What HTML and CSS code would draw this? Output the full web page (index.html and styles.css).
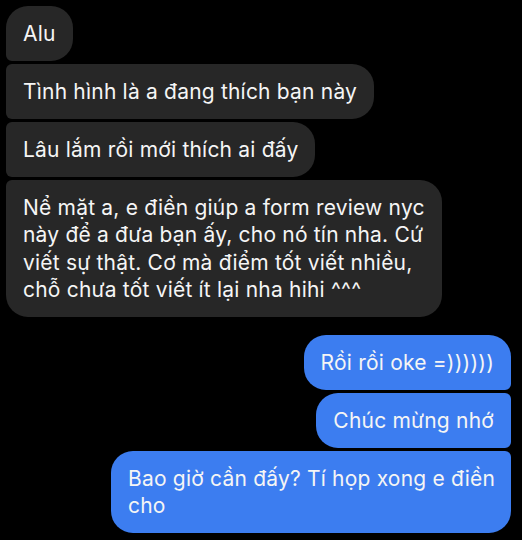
FILE: index.html
```html
<!DOCTYPE html>
<html lang="vi">
<head>
<meta charset="utf-8">
<link rel="stylesheet" href="styles.css">
</head>
<body>
<div class="chat">
  <div class="group in">
    <div class="bubble first">Alu</div>
    <div class="bubble mid">Tình hình là a đang thích bạn này</div>
    <div class="bubble mid">Lâu lắm rồi mới thích ai đấy</div>
    <div class="bubble last wide">Nể mặt a, e điền giúp a form review nyc<br>này để a đưa bạn ấy, cho nó tín nha. Cứ<br>viết sự thật. Cơ mà điểm tốt viết nhiều,<br>chỗ chưa tốt viết ít lại nha hihi ^^^</div>
  </div>
  <div class="group out">
    <div class="bubble first">Rồi rồi oke =))))))</div>
    <div class="bubble mid">Chúc mừng nhớ</div>
    <div class="bubble last wide">Bao giờ cần đấy? Tí họp xong e điền<br>cho</div>
  </div>
</div>
</body>
</html>
```
FILE: styles.css
```css
html, body {
  margin: 0;
  padding: 0;
  background: #000;
}
body {
  font-family: Inter, "Noto Sans", sans-serif;
  font-size: 21px;
  letter-spacing: 0.2px;
  line-height: 27.5px;
  color: #f5f5f5;
}
.chat {
  display: flex;
  flex-direction: column;
  gap: 18px;
  padding: 6px 11px 0 6px;
}
.group {
  display: flex;
  flex-direction: column;
  gap: 3.5px;
}
.group.in { align-items: flex-start; }
.group.out { align-items: flex-end; }
.bubble {
  padding: 13.5px 17px;
  border-radius: 22px;
  white-space: nowrap;
}
.in .bubble {
  background: #272727;
}
.out .bubble {
  background: #3c7df0;
}
.bubble.wide { box-sizing: border-box; }
.in .bubble.wide { width: 436px; }
.out .bubble.wide { width: 400px; }
.in .first { border-bottom-left-radius: 6px; }
.in .mid { border-top-left-radius: 6px; border-bottom-left-radius: 6px; }
.in .last { border-top-left-radius: 6px; }
.out .first { border-bottom-right-radius: 6px; }
.out .mid { border-top-right-radius: 6px; border-bottom-right-radius: 6px; }
.out .last { border-top-right-radius: 6px; }
```
